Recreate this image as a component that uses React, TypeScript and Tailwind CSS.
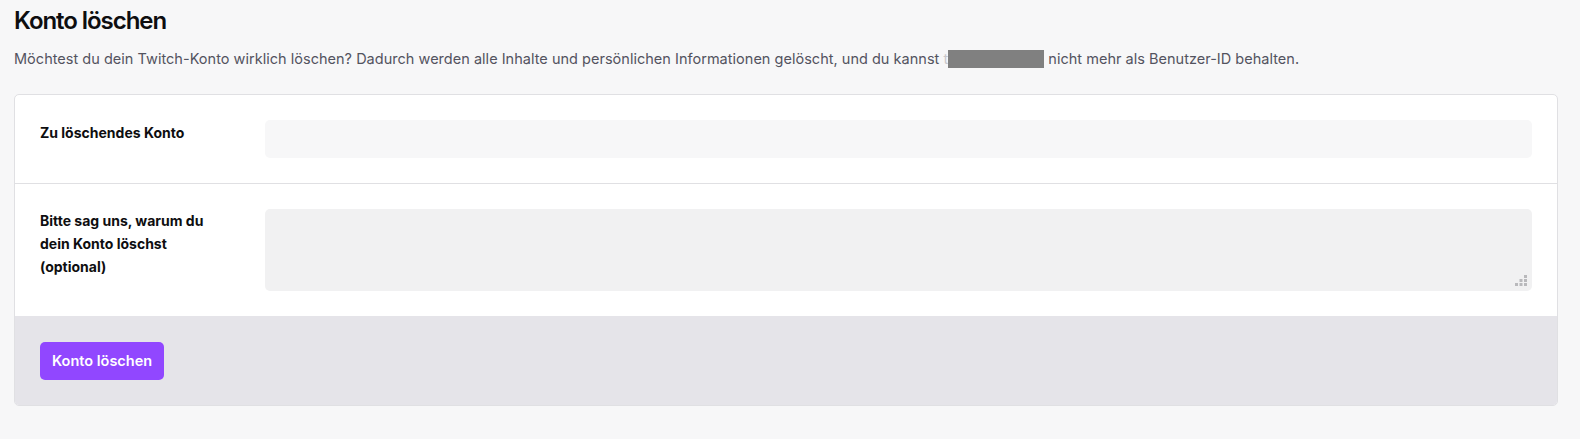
const font = { fontFamily: "Inter, 'Noto Sans', sans-serif" };

function ResizeGrip() {
  return (
    <svg
      width="12"
      height="11"
      viewBox="0 0 12 11"
      className="pointer-events-none absolute bottom-[5px] right-[5px]"
      aria-hidden="true"
    >
      <g fill="#b9b9bc">
        <rect x="9" y="0" width="3" height="3" />
        <rect x="4.5" y="4" width="3" height="3" />
        <rect x="9" y="4" width="3" height="3" />
        <rect x="0" y="8" width="3" height="3" />
        <rect x="4.5" y="8" width="3" height="3" />
        <rect x="9" y="8" width="3" height="3" />
      </g>
    </svg>
  );
}

export default function App() {
  return (
    <div
      className="min-h-screen bg-[#f7f7f8] pl-[14px] pr-[22px] pt-[6px] text-[#0e0e10]"
      style={font}
    >
      <h1 className="text-[24px] font-semibold leading-[30px] tracking-[-1.05px]">
        Konto löschen
      </h1>
      <p className="mt-[13px] text-[14.5px] leading-[20px] tracking-[0.02px] text-[#53535f]">
        Möchtest du dein Twitch-Konto wirklich löschen? Dadurch werden alle
        Inhalte und persönlichen Informationen gelöscht, und du kannst{" "}
        <span className="text-[#c8c8cc]">t</span>
        <span className="inline-block h-[18px] w-[96px] bg-[#808080] align-[-4px]" />{" "}
        nicht mehr als Benutzer-ID behalten.
      </p>

      <div className="mt-[25px] overflow-hidden rounded-[5px] border border-[#e0e0e3] bg-white">
        <div className="flex border-b border-[#e0e0e3] px-[25px] py-[25px]">
          <label className="w-[225px] shrink-0 pr-[40px] pt-[1px] text-[14px] font-bold leading-[23px]">
            Zu löschendes Konto
          </label>
          <div className="h-[38px] flex-1 rounded-[5px] bg-[#f7f7f8]" />
        </div>

        <div className="flex px-[25px] py-[25px]">
          <label className="w-[225px] shrink-0 pr-[40px] text-[14px] font-bold leading-[23px]">
            Bitte sag uns, warum du dein Konto löschst (optional)
          </label>
          <div className="relative h-[82px] flex-1">
            <textarea className="block h-full w-full resize-none rounded-[5px] bg-[#f1f1f2] outline-none" />
            <ResizeGrip />
          </div>
        </div>

        <div className="bg-[#e5e4e9] px-[25px] pb-[25px] pt-[26px]">
          <button className="h-[38px] rounded-[5px] bg-[#9147ff] px-[12px] text-[14.5px] font-semibold text-white">
            Konto löschen
          </button>
        </div>
      </div>
    </div>
  );
}
